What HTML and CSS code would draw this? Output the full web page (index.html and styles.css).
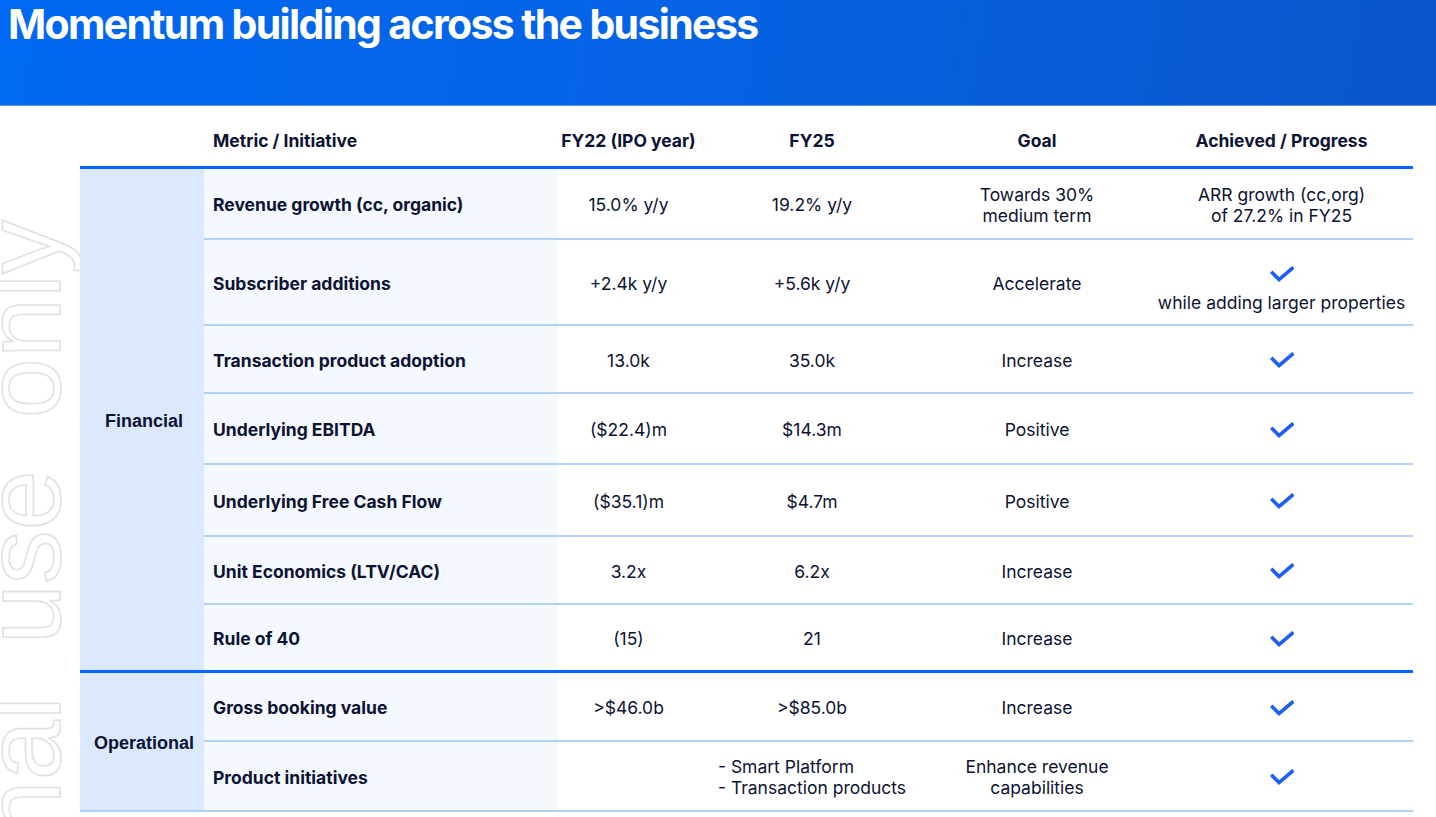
FILE: index.html
```html
<!DOCTYPE html>
<html lang="en">
<head>
<meta charset="utf-8">
<title>Momentum building across the business</title>
<link rel="stylesheet" href="styles.css">
</head>
<body>
<div class="page">
  <div class="watermark">For personal use only</div>
  <header class="banner">
    <h1 class="title">Momentum building across the business</h1>
  </header>
  <div class="table">
    <div class="th blank"></div>
    <div class="th left">Metric / Initiative</div>
    <div class="th">FY22 (IPO year)</div>
    <div class="th">FY25</div>
    <div class="th">Goal</div>
    <div class="th">Achieved / Progress</div>

    <div class="cat fin">Financial</div>

    <div class="metric">Revenue growth (cc, organic)</div>
    <div class="td">15.0% y/y</div>
    <div class="td">19.2% y/y</div>
    <div class="td">Towards 30%<br>medium term</div>
    <div class="td">ARR growth (cc,org)<br>of 27.2% in FY25</div>

    <div class="metric">Subscriber additions</div>
    <div class="td">+2.4k y/y</div>
    <div class="td">+5.6k y/y</div>
    <div class="td">Accelerate</div>
    <div class="td stack"><svg class="check" viewBox="0 0 24 16"><polyline points="2.5,7 9,13.5 22,2.5"/></svg><span class="note">while adding larger properties</span></div>

    <div class="metric">Transaction product adoption</div>
    <div class="td">13.0k</div>
    <div class="td">35.0k</div>
    <div class="td">Increase</div>
    <div class="td"><svg class="check" viewBox="0 0 24 16"><polyline points="2.5,7 9,13.5 22,2.5"/></svg></div>

    <div class="metric">Underlying EBITDA</div>
    <div class="td">($22.4)m</div>
    <div class="td">$14.3m</div>
    <div class="td">Positive</div>
    <div class="td"><svg class="check" viewBox="0 0 24 16"><polyline points="2.5,7 9,13.5 22,2.5"/></svg></div>

    <div class="metric">Underlying Free Cash Flow</div>
    <div class="td">($35.1)m</div>
    <div class="td">$4.7m</div>
    <div class="td">Positive</div>
    <div class="td"><svg class="check" viewBox="0 0 24 16"><polyline points="2.5,7 9,13.5 22,2.5"/></svg></div>

    <div class="metric">Unit Economics (LTV/CAC)</div>
    <div class="td">3.2x</div>
    <div class="td">6.2x</div>
    <div class="td">Increase</div>
    <div class="td"><svg class="check" viewBox="0 0 24 16"><polyline points="2.5,7 9,13.5 22,2.5"/></svg></div>

    <div class="metric sep">Rule of 40</div>
    <div class="td sep">(15)</div>
    <div class="td sep">21</div>
    <div class="td sep">Increase</div>
    <div class="td sep"><svg class="check" viewBox="0 0 24 16"><polyline points="2.5,7 9,13.5 22,2.5"/></svg></div>

    <div class="cat ops">Operational</div>

    <div class="metric">Gross booking value</div>
    <div class="td">&gt;$46.0b</div>
    <div class="td">&gt;$85.0b</div>
    <div class="td">Increase</div>
    <div class="td"><svg class="check" viewBox="0 0 24 16"><polyline points="2.5,7 9,13.5 22,2.5"/></svg></div>

    <div class="metric">Product initiatives</div>
    <div class="td"></div>
    <div class="td"><span class="list">- Smart Platform<br>- Transaction products</span></div>
    <div class="td">Enhance revenue<br>capabilities</div>
    <div class="td"><svg class="check" viewBox="0 0 24 16"><polyline points="2.5,7 9,13.5 22,2.5"/></svg></div>
  </div>
</div>
</body>
</html>
```

FILE: styles.css
```css
* { box-sizing: border-box; }

html, body {
  margin: 0;
  padding: 0;
  background: #ffffff;
}

body {
  width: 1436px;
  height: 817px;
  overflow: hidden;
  font-family: Inter, "Noto Sans", "Liberation Sans", sans-serif;
  color: #0c1333;
}

.page {
  position: relative;
  width: 1436px;
  height: 817px;
  overflow: hidden;
}

.banner {
  height: 106px;
  background: linear-gradient(100deg, #0068f2 0%, #0563e6 45%, #0a56c9 100%);
  border-bottom: 1px solid #5b93e6;
  padding: 1px 0 0 8px;
}

.title {
  margin: 0;
  font-family: Inter, "Liberation Sans", sans-serif;
  font-weight: 700;
  font-size: 41px;
  line-height: 46px;
  letter-spacing: -1.65px;
  color: #ffffff;
}

.watermark {
  position: absolute;
  left: -31px;
  top: 220px;
  writing-mode: vertical-rl;
  transform: rotate(180deg);
  font-family: "Liberation Sans", Arial, sans-serif;
  font-size: 108px;
  line-height: 1;
  word-spacing: 22px;
  white-space: nowrap;
  color: transparent;
  -webkit-text-stroke: 1.6px #e1e1e1;
  pointer-events: none;
  z-index: 0;
}

.table {
  position: relative;
  z-index: 1;
  margin: 8px 0 0 80px;
  width: 1333px;
  display: grid;
  grid-template-columns: 124px 353px 143px 224px 226px 263px;
  grid-template-rows: 55px 71px 86px 68px 71px 72px 68px 68px 69px 70px;
  font-size: 17.5px;
  line-height: 21px;
}

.th {
  display: flex;
  align-items: center;
  justify-content: center;
  font-weight: 700;
  border-bottom: 3px solid #0066ff;
  padding-top: 1px;
  background: #ffffff;
}

.th.left {
  justify-content: flex-start;
  padding-left: 9px;
}

.cat {
  grid-column: 1;
  display: flex;
  align-items: center;
  justify-content: center;
  font-family: "Liberation Sans", Arial, sans-serif;
  font-weight: 700;
  font-size: 18px;
  padding: 4px 0 0 4px;
  background: #dbe8fd;
}

.cat.fin {
  grid-row: 2 / 9;
  border-bottom: 3px solid #0066ff;
}

.cat.ops {
  grid-row: 9 / 11;
  border-bottom: 2px solid #b3d1f7;
}

.metric {
  display: flex;
  align-items: center;
  padding: 2px 0 0 9px;
  font-weight: 700;
  background: #f4f8ff;
  border-bottom: 2px solid #b3d1f7;
}

.td {
  display: flex;
  align-items: center;
  justify-content: center;
  text-align: center;
  padding-top: 2px;
  background: #ffffff;
  border-bottom: 2px solid #b3d1f7;
}

.sep {
  border-bottom: 3px solid #0066ff;
}

.stack {
  flex-direction: column;
  padding-top: 14px;
}

.note {
  display: block;
  margin-top: 10px;
}

.list {
  display: inline-block;
  text-align: left;
}

.check {
  width: 24px;
  height: 16px;
  display: block;
}

.check polyline {
  fill: none;
  stroke: #1f5ef6;
  stroke-width: 3.6;
  stroke-linecap: square;
  stroke-linejoin: miter;
}
```
